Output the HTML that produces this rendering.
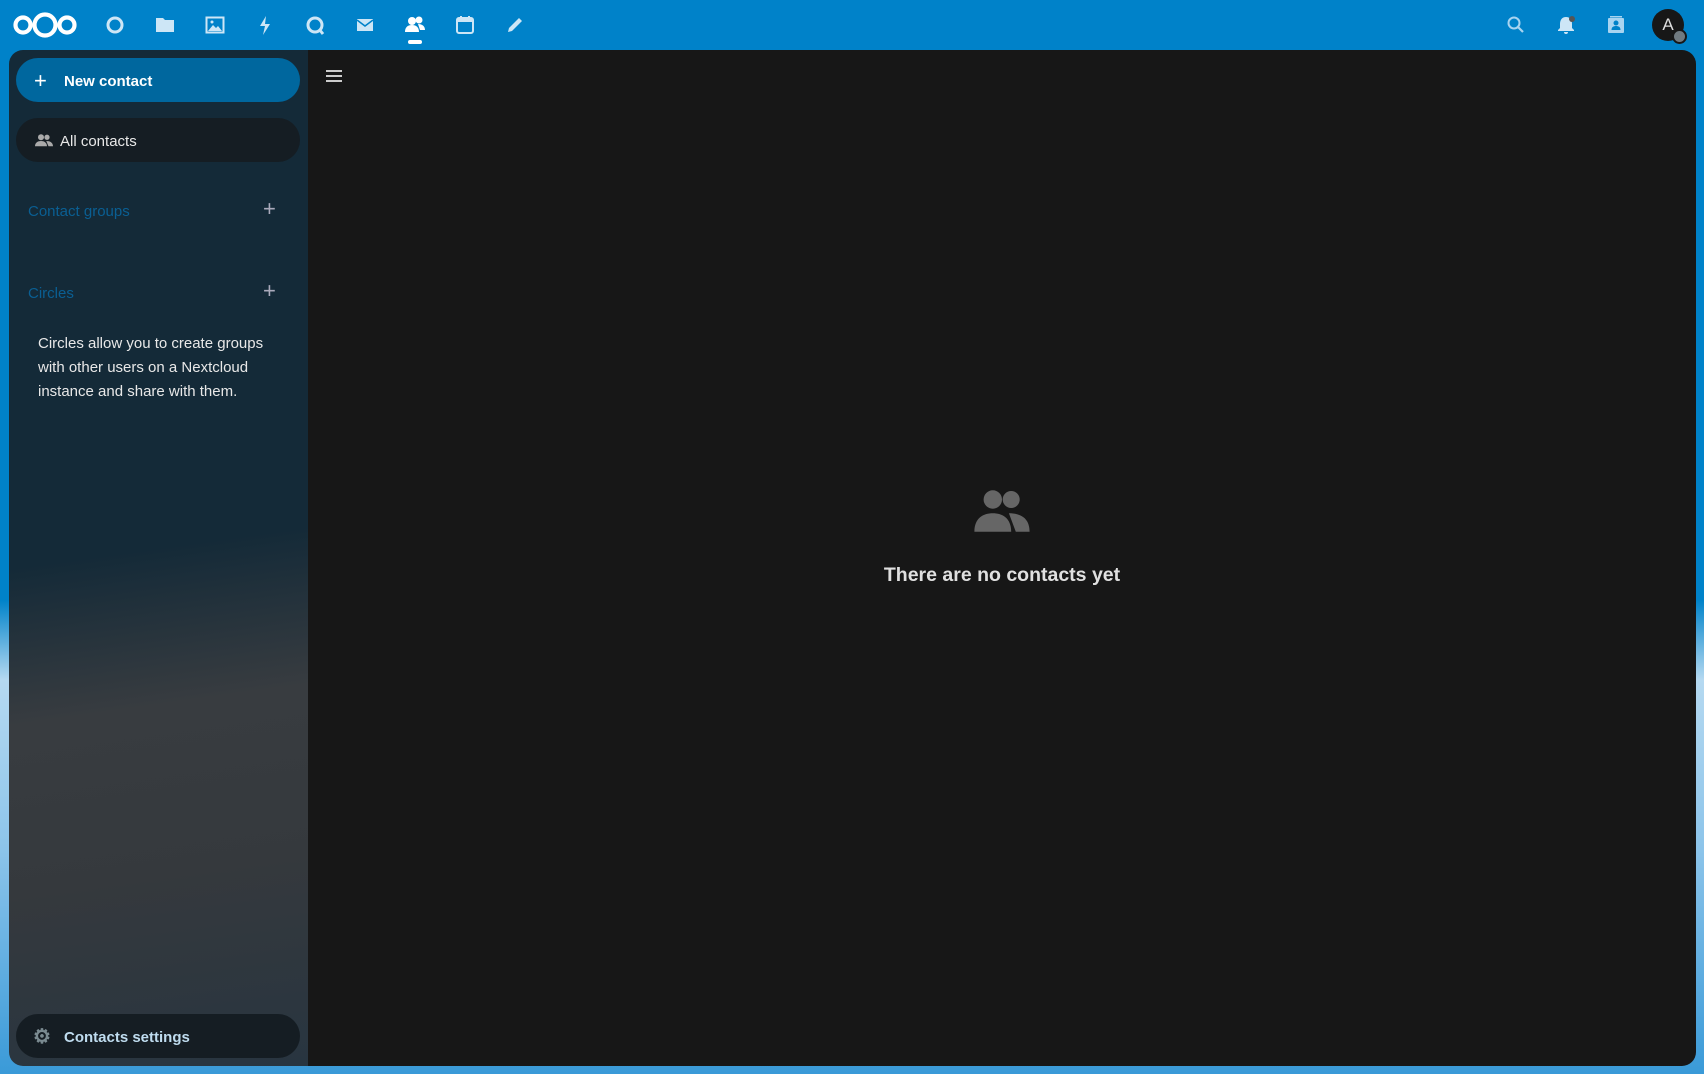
<!DOCTYPE html>
<html><head><meta charset="utf-8"><style>
*{margin:0;padding:0;box-sizing:border-box}
body{width:1704px;height:1074px;overflow:hidden;font-family:"Liberation Sans",sans-serif;background:linear-gradient(180deg,#0082c9 0,#0082c9 600px,#b5d9f1 680px,#8cc4ea 850px,#3a9ad8 1074px);position:relative}
.hdr{position:absolute;left:0;top:0;width:1704px;height:50px;background:#0082c9}
.ic{position:absolute;top:13px;width:24px;height:24px}
.side{position:absolute;left:9px;top:50px;width:299px;height:1016px;border-radius:14px 0 0 14px;background:linear-gradient(172deg,#142a38 0%,#142a38 49%,#383c40 64%,#35393d 80%,#283540 100%)}
.main{position:absolute;left:308px;top:50px;width:1388px;height:1016px;background:#171717;border-radius:0 14px 14px 0}
.btn{position:absolute;left:7px;width:284px;height:44px;border-radius:22px;color:#fff;font-size:15px;line-height:48px}
.sec{position:absolute;left:19px;color:#0a5f93;font-size:15px}
.plus{position:absolute;left:254px;color:#aab;font-size:22px;font-weight:300}
p.t{position:absolute;left:29px;top:282px;width:240px;color:#e8e8e8;font-size:15px;line-height:24px}
</style></head><body>
<div class="hdr">
<svg style="position:absolute;left:13px;top:11px" width="64" height="28" viewBox="0 0 64 28"><g fill="none" stroke="#fff" stroke-width="4.2"><circle cx="10" cy="14" r="7.5"/><circle cx="32" cy="14" r="10.5"/><circle cx="54" cy="14" r="7.5"/></g></svg>
<svg class="ic" style="left:103px" viewBox="0 0 24 24"><circle cx="12" cy="12" r="7" fill="none" stroke="#cde6f6" stroke-width="3"/></svg>
<svg class="ic" style="left:153px" viewBox="0 0 24 24"><path d="M3 5h7l2 2h9v12H3z" fill="#cde6f6"/></svg>
<svg class="ic" style="left:203px" viewBox="0 0 24 24"><rect x="3.5" y="4.5" width="17" height="15" fill="none" stroke="#cde6f6" stroke-width="2"/><path d="M5 18l5-6 3 3 2-2 4 5z" fill="#cde6f6"/><circle cx="9" cy="9" r="1.5" fill="#cde6f6"/></svg>
<svg class="ic" style="left:253px" viewBox="0 0 24 24"><path d="M13 3L7 13h5l-2 9 7-11h-5z" fill="#cde6f6"/></svg>
<svg class="ic" style="left:303px" viewBox="0 0 24 24"><circle cx="12" cy="12" r="7" fill="none" stroke="#cde6f6" stroke-width="3"/><path d="M16 16l4 5" stroke="#cde6f6" stroke-width="3"/></svg>
<svg class="ic" style="left:353px" viewBox="0 0 24 24"><rect x="4" y="6" width="16" height="12" fill="#cde6f6"/><path d="M4 7l8 6 8-6" fill="none" stroke="#0082c9" stroke-width="1.5"/></svg>
<svg class="ic" style="left:403px" viewBox="0 0 24 24"><circle cx="9" cy="8" r="4" fill="#fff"/><circle cx="16" cy="7" r="3.5" fill="#fff"/><path d="M2 19c0-5 3-7 7-7s7 2 7 7zM15 11c4 0 7 2 7 6h-5z" fill="#fff"/></svg>
<div style="position:absolute;left:408px;top:40px;width:14px;height:4px;border-radius:2px;background:#fff"></div>
<svg class="ic" style="left:453px" viewBox="0 0 24 24"><rect x="4" y="5" width="16" height="15" rx="2" fill="none" stroke="#cde6f6" stroke-width="2"/><rect x="4" y="5" width="16" height="4" fill="#cde6f6"/><path d="M8 3v4M16 3v4" stroke="#cde6f6" stroke-width="2"/></svg>
<svg class="ic" style="left:503px" viewBox="0 0 24 24"><path d="M5 19l1-4L16 5l3 3L9 18z" fill="#cde6f6"/></svg>
<svg class="ic" style="left:1504px" viewBox="0 0 24 24"><circle cx="10" cy="10" r="5.5" fill="none" stroke="#a8d4f0" stroke-width="2"/><path d="M14 14l5 5" stroke="#a8d4f0" stroke-width="2.2"/></svg>
<svg class="ic" style="left:1554px" viewBox="0 0 24 24"><path d="M12 4c-4 0-6 3-6 7v4l-2 2v1h16v-1l-2-2v-4c0-4-2-7-6-7zM10 19h4a2 2 0 01-4 0z" fill="#cde6f6"/><circle cx="18" cy="6" r="3" fill="#555"/></svg>
<svg class="ic" style="left:1604px" viewBox="0 0 24 24"><rect x="4" y="5" width="16" height="15" rx="1" fill="#a8d4f0"/><rect x="6" y="3" width="12" height="1.5" fill="#a8d4f0"/><circle cx="12" cy="10" r="2.5" fill="#0082c9"/><path d="M7.5 17c0-3 2-4 4.5-4s4.5 1 4.5 4z" fill="#0082c9"/></svg>
<div style="position:absolute;left:1652px;top:9px;width:32px;height:32px;border-radius:50%;background:#171717;color:#ddd;font-size:17px;text-align:center;line-height:32px">A</div>
<div style="position:absolute;left:1672px;top:29px;width:15px;height:15px;border-radius:50%;background:#707a80;border:2px solid #171717"></div>
</div>
<div class="side">
<div class="btn" style="top:8px;background:#00679e;font-weight:bold"><span style="position:absolute;left:18px;font-size:22px;font-weight:300;line-height:46px">+</span><span style="position:absolute;left:48px">New contact</span></div>
<div class="btn" style="top:68px;background:#151d23;color:#e8e8e8"><svg style="position:absolute;left:19px;top:15px" width="18" height="16" viewBox="0 0 24 20"><circle cx="8" cy="5" r="4" fill="#aaa"/><circle cx="16" cy="5" r="3.5" fill="#aaa"/><path d="M0 17c0-5 4-7 8-7s8 2 8 7zM15 10c5 0 9 2 9 7h-6z" fill="#aaa"/></svg><span style="position:absolute;left:44px">All contacts</span></div>
<div class="sec" style="top:153px">Contact groups</div><div class="plus" style="top:146px">+</div>
<div class="sec" style="top:235px">Circles</div><div class="plus" style="top:228px">+</div>
<p class="t">Circles allow you to create groups with other users on a Nextcloud instance and share with them.</p>
<div class="btn" style="top:964px;background:#151d23;color:#bfdcef;font-weight:bold;width:284px"><span style="position:absolute;left:17px;color:#7a8a90;font-size:20px;line-height:46px">⚙</span><span style="position:absolute;left:48px">Contacts settings</span></div>
</div>
<div class="main">
<div style="position:absolute;left:18px;top:20px;width:16px">
<div style="height:2px;background:#ccc;margin-bottom:3px"></div><div style="height:2px;background:#ccc;margin-bottom:3px"></div><div style="height:2px;background:#ccc"></div></div>
<svg style="position:absolute;left:666px;top:438px" width="56" height="46" viewBox="0 0 24 20"><circle cx="8" cy="5" r="4" fill="#666"/><circle cx="16" cy="5" r="3.7" fill="#666"/><path d="M0 19c0-6 4-8 8-8s8 2 8 8zM15 11c5 0 9 2 9 8h-6z" fill="#666"/></svg>
<div style="position:absolute;left:0;width:1388px;top:514px;text-align:center;color:#e0e0e0;font-weight:bold;font-size:19.5px">There are no contacts yet</div>
</div>
</body></html>
